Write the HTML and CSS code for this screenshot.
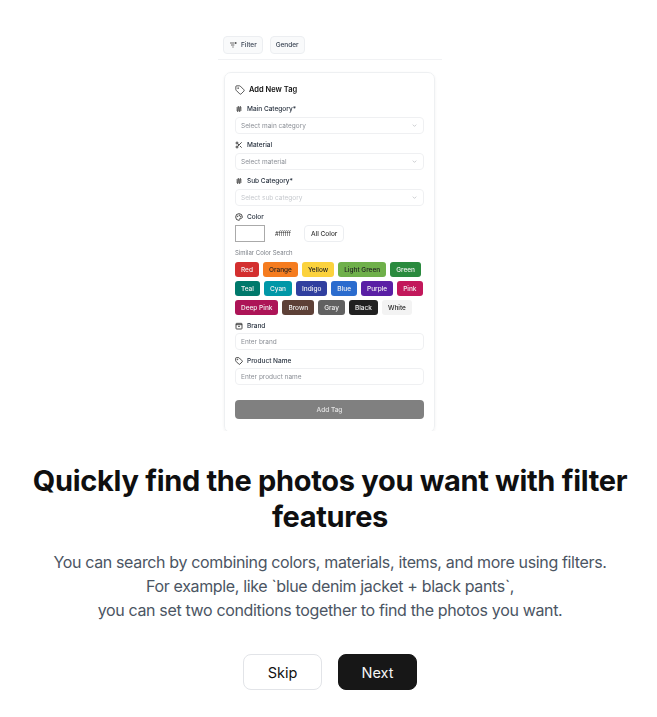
FILE: index.html
```html
<!DOCTYPE html>
<html lang="en">
<head>
    <meta charset="UTF-8">
    <meta name="viewport" content="width=device-width, initial-scale=1.0">
    <title>Filter features</title>
    <link rel="stylesheet" href="styles.css">
</head>
<body>
    <div class="page">
        <!-- App preview -->
        <div class="preview">
            <div class="filter-bar">
                <span class="chip">
                    <svg class="chip-icon" viewBox="0 0 24 24"><path d="M3 6h13M6 12h10M10 18h4M20 3v6M17 6h6"/></svg>
                    Filter
                </span>
                <span class="chip">Gender</span>
            </div>

            <div class="card">
                <div class="card-title">
                    <svg class="icon-lg" viewBox="0 0 24 24"><path d="M12.6 2.6A2 2 0 0 0 11.2 2H4a2 2 0 0 0-2 2v7.2a2 2 0 0 0 .6 1.4l8.7 8.7a2.4 2.4 0 0 0 3.4 0l6.6-6.6a2.4 2.4 0 0 0 0-3.4z"/><circle cx="7.5" cy="7.5" r="1"/></svg>
                    Add New Tag
                </div>

                <div class="label">
                    <svg class="icon" viewBox="0 0 24 24"><path d="M4 9h16M4 15h16M10 3L8 21M16 3l-2 18"/></svg>
                    Main Category*
                </div>
                <div class="field">Select main category
                    <svg class="chevron" viewBox="0 0 24 24"><path d="M6 9l6 6 6-6"/></svg>
                </div>

                <div class="label">
                    <svg class="icon" viewBox="0 0 24 24"><circle cx="6" cy="6" r="3"/><circle cx="6" cy="18" r="3"/><path d="M20 4L8.1 15.9M14.5 14.5L20 20M8.1 8.1L12 12"/></svg>
                    Material
                </div>
                <div class="field">Select material
                    <svg class="chevron" viewBox="0 0 24 24"><path d="M6 9l6 6 6-6"/></svg>
                </div>

                <div class="label">
                    <svg class="icon" viewBox="0 0 24 24"><path d="M4 9h16M4 15h16M10 3L8 21M16 3l-2 18"/></svg>
                    Sub Category*
                </div>
                <div class="field field-disabled">Select sub category
                    <svg class="chevron" viewBox="0 0 24 24"><path d="M6 9l6 6 6-6"/></svg>
                </div>

                <div class="label">
                    <svg class="icon" viewBox="0 0 24 24"><path d="M12 22a10 10 0 1 1 10-10c0 3-2 4-4 4h-2.5a2 2 0 0 0-1.5 3.3c.6.8.2 2.7-2 2.7z"/><circle cx="8" cy="10" r="1"/><circle cx="13" cy="7" r="1"/><circle cx="17" cy="11" r="1"/></svg>
                    Color
                </div>
                <div class="color-row">
                    <span class="swatch"></span>
                    <span class="hex">#ffffff</span>
                    <span class="all-color">All Color</span>
                </div>

                <div class="similar">Similar Color Search</div>
                <div class="colors">
                    <span class="color c-red">Red</span>
                    <span class="color c-orange">Orange</span>
                    <span class="color c-yellow">Yellow</span>
                    <span class="color c-lightgreen">Light Green</span>
                    <span class="color c-green">Green</span>
                    <span class="color c-teal">Teal</span>
                    <span class="color c-cyan">Cyan</span>
                    <span class="color c-indigo">Indigo</span>
                    <span class="color c-blue">Blue</span>
                    <span class="color c-purple">Purple</span>
                    <span class="color c-pink">Pink</span>
                    <span class="color c-deeppink">Deep Pink</span>
                    <span class="color c-brown">Brown</span>
                    <span class="color c-gray">Gray</span>
                    <span class="color c-black">Black</span>
                    <span class="color c-white">White</span>
                </div>

                <div class="label">
                    <svg class="icon" viewBox="0 0 24 24"><rect x="3" y="4" width="18" height="17" rx="2"/><path d="M3 8h18M9 13h6"/></svg>
                    Brand
                </div>
                <div class="field field-input">Enter brand</div>

                <div class="label">
                    <svg class="icon" viewBox="0 0 24 24"><path d="M12.6 2.6A2 2 0 0 0 11.2 2H4a2 2 0 0 0-2 2v7.2a2 2 0 0 0 .6 1.4l8.7 8.7a2.4 2.4 0 0 0 3.4 0l6.6-6.6a2.4 2.4 0 0 0 0-3.4z"/><circle cx="7.5" cy="7.5" r="1"/></svg>
                    Product Name
                </div>
                <div class="field field-input">Enter product name</div>

                <div class="add-tag">Add Tag</div>
            </div>
        </div>

        <h1>Quickly find the photos you want with filter features</h1>

        <p class="desc">
            You can search by combining colors, materials, items, and more using filters.<br>
            For example, like `blue denim jacket + black pants`,<br>
            you can set two conditions together to find the photos you want.
        </p>

        <div class="actions">
            <button class="button button-skip">Skip</button>
            <button class="button button-next">Next</button>
        </div>
    </div>
</body>
</html>
```

FILE: styles.css
```css
body {
    margin: 0;
    background: #fff;
    font-family: 'Inter', 'Liberation Sans', sans-serif;
    color: #111;
    overflow: hidden;
}

.page {
    display: flex;
    flex-direction: column;
    align-items: center;
    box-sizing: border-box;
    height: 717px;
    padding-left: 3px;
}

/* App preview, shrunk like a screenshot */
.preview {
    width: 224px;
    height: 395px;
    margin-top: 36px;
    overflow: hidden;
    filter: blur(0.4px);
}

.filter-bar {
    display: flex;
    gap: 7px;
    height: 23px;
    border-bottom: 1px solid #f1f2f4;
    padding-left: 5px;
    align-items: flex-start;
}

.chip {
    display: flex;
    align-items: center;
    gap: 4px;
    height: 16px;
    padding: 0 5px;
    background: #f9fafb;
    border: 1px solid #eceef1;
    border-radius: 4px;
    font-size: 6.5px;
    font-weight: 500;
    color: #374151;
}

.chip-icon {
    width: 8px;
    height: 8px;
    fill: none;
    stroke: #222;
    stroke-width: 2;
}

.card {
    width: 189px;
    height: 348px;
    margin: 12px 0 0 6px;
    padding: 11px 10px 0 10px;
    border: 1px solid #eef0f2;
    border-radius: 7px;
    box-shadow: 0 1px 3px rgba(0, 0, 0, 0.06);
}

.card-title {
    display: flex;
    align-items: center;
    gap: 4px;
    height: 11px;
    font-size: 7.5px;
    font-weight: 600;
    color: #111;
    margin-bottom: 8px;
}

.icon-lg {
    width: 10px;
    height: 10px;
    fill: none;
    stroke: #222;
    stroke-width: 1.8;
}

.label {
    display: flex;
    align-items: center;
    gap: 4px;
    height: 11px;
    margin-bottom: 3px;
    font-size: 6.5px;
    font-weight: 500;
    color: #1f2937;
}

.icon {
    width: 8px;
    height: 8px;
    fill: none;
    stroke: #222;
    stroke-width: 2.4;
}

.field {
    display: flex;
    align-items: center;
    justify-content: space-between;
    box-sizing: border-box;
    height: 17px;
    padding: 0 5px 0 5px;
    margin-bottom: 5px;
    border: 1px solid #eff0f2;
    border-radius: 4px;
    font-size: 6.5px;
    color: #8b8f96;
}

.field-disabled {
    color: #c6c9ce;
}

.field-input {
    margin-top: -1px;
}

.chevron {
    width: 7px;
    height: 7px;
    fill: none;
    stroke: #a8acb2;
    stroke-width: 2;
}

.color-row {
    display: flex;
    align-items: center;
    height: 17px;
    margin-bottom: 7px;
}

.swatch {
    box-sizing: border-box;
    width: 30px;
    height: 17px;
    background: #fff;
    border: 1px solid #aaa;
    margin-right: 10px;
}

.hex {
    font-size: 6px;
    color: #333;
    margin-right: 13px;
}

.all-color {
    display: flex;
    align-items: center;
    height: 15px;
    padding: 0 6px;
    border: 1px solid #eceef1;
    border-radius: 4px;
    font-size: 6.5px;
    font-weight: 500;
    color: #333;
}

.similar {
    height: 11px;
    margin-bottom: 2px;
    font-size: 6px;
    color: #7c8088;
}

.colors {
    display: flex;
    flex-wrap: wrap;
    gap: 4px;
    margin-bottom: 5px;
}

.color {
    display: flex;
    align-items: center;
    height: 15px;
    padding: 0 6px;
    border-radius: 3px;
    font-size: 6.5px;
    font-weight: 500;
    color: #f3f3f3;
}

.c-red { background: #d32f2f; }
.c-orange { background: #f57c1f; color: #222; }
.c-yellow { background: #fbd23d; color: #222; }
.c-lightgreen { background: #6fb04a; color: #222; }
.c-green { background: #2a8a3e; }
.c-teal { background: #00796b; }
.c-cyan { background: #0097a7; }
.c-indigo { background: #303f9f; }
.c-blue { background: #2b6cce; }
.c-purple { background: #5a1fa5; }
.c-pink { background: #c2185b; }
.c-deeppink { background: #ad1457; }
.c-brown { background: #5d4037; }
.c-gray { background: #616161; }
.c-black { background: #212121; }
.c-white { background: #f3f3f3; color: #222; }

.add-tag {
    display: flex;
    align-items: center;
    justify-content: center;
    height: 19px;
    margin-top: 15px;
    background: #808080;
    border-radius: 4px;
    font-size: 6.5px;
    font-weight: 500;
    color: #e4e4e4;
}

h1 {
    width: 640px;
    margin: 32px 0 0 0;
    font-size: 29px;
    line-height: 36px;
    font-weight: 700;
    letter-spacing: -0.31px;
    text-align: center;
    color: #0f0f10;
}

.desc {
    margin: 15px 0 0 0;
    font-size: 16px;
    line-height: 24px;
    letter-spacing: -0.35px;
    text-align: center;
    color: #4b5563;
}

.actions {
    display: flex;
    gap: 16px;
    margin-top: 32px;
}

.button {
    box-sizing: border-box;
    width: 79px;
    height: 36px;
    border-radius: 8px;
    font-family: inherit;
    font-size: 14.5px;
    font-weight: 400;
}

.button-skip {
    background: #fff;
    border: 1px solid #e2e4e8;
    color: #111;
}

.button-next {
    background: #171717;
    border: 1px solid #171717;
    color: #f5f5f5;
}
```
